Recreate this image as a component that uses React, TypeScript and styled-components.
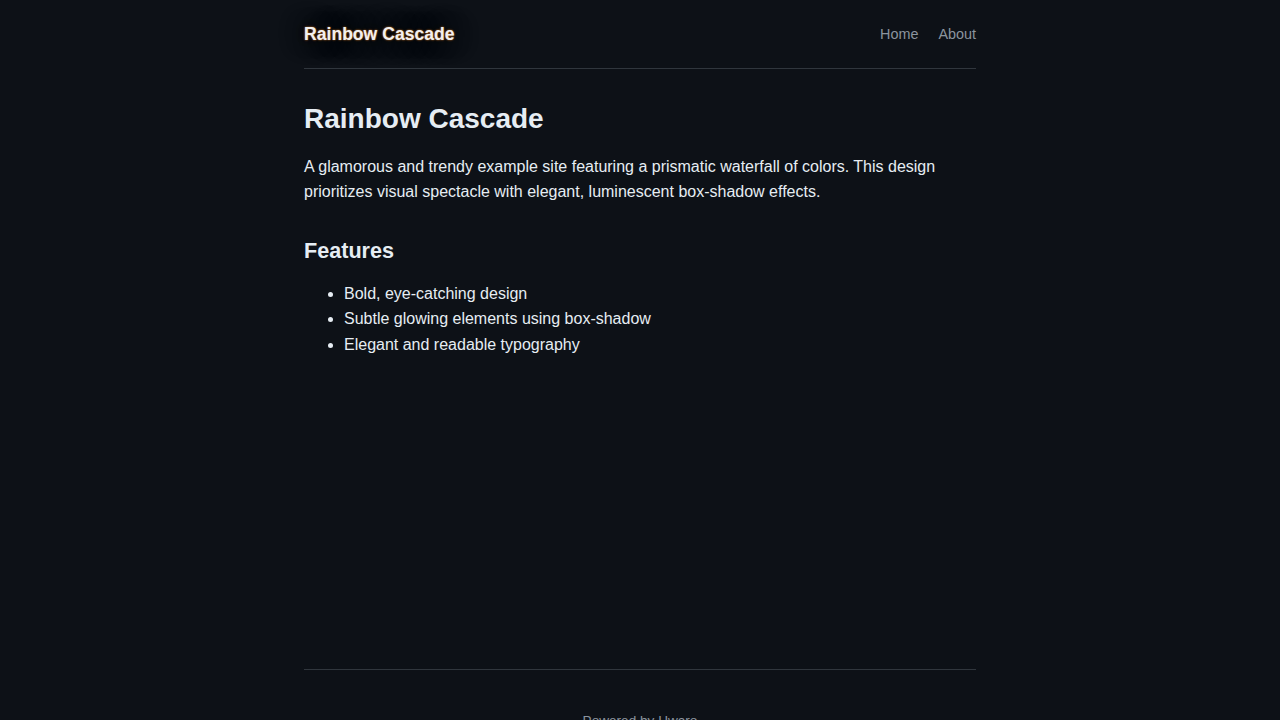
import styled, {createGlobalStyle} from 'styled-components';

const GlobalStyle = createGlobalStyle`
  body {
    margin: 0;
    background-color: #0d1117;
    color: #e6edf3;
    font-family: "Liberation Sans", Arial, sans-serif;
    font-size: 16px;
    line-height: 1.6;
  }
`;

const Page = styled.div`
  max-width: 672px;
  margin: 0 auto;
`;

const Header = styled.header`
  display: flex;
  justify-content: space-between;
  align-items: center;
  height: 68px;
  border-bottom: 1px solid #30363d;
`;

const Logo = styled.a`
  color: #f0f0f0;
  font-size: 17.6px;
  font-weight: bold;
  line-height: 22px;
  text-decoration: none;
  text-shadow:
    0 0 2px rgba(255, 140, 40, 0.9),
    0 0 18px #000008,
    0 0 24px #000008;
`;

const Nav = styled.nav`
  display: flex;
  gap: 20px;
  line-height: 22px;
`;

const NavLink = styled.a`
  color: #8b949e;
  font-size: 14.4px;
  text-decoration: none;
`;

const Main = styled.main`
  box-sizing: border-box;
  min-height: 600px;
  padding-top: 33px;
`;

const Title = styled.h1`
  font-size: 28px;
  line-height: 1.2;
  margin: 0 0 18px;
`;

const Intro = styled.p`
  margin: 0;
`;

const SectionTitle = styled.h2`
  font-size: 21.6px;
  line-height: 1.2;
  margin: 33px 0 17px;
`;

const List = styled.ul`
  margin: 0;
  padding-left: 40px;
`;

const Footer = styled.footer`
  border-top: 1px solid #30363d;
  padding: 40px 0;
  text-align: center;
  color: #8b949e;
  font-size: 13.6px;
`;

const FooterLink = styled.a`
  color: #8b949e;
  text-decoration: none;
`;

export default function App() {
  return (
    <>
      <GlobalStyle />
      <Page>
        <Header>
          <Logo href="#">Rainbow Cascade</Logo>
          <Nav>
            <NavLink href="#">Home</NavLink>
            <NavLink href="#">About</NavLink>
          </Nav>
        </Header>
        <Main>
          <Title>Rainbow Cascade</Title>
          <Intro>
            A glamorous and trendy example site featuring a prismatic waterfall of colors. This
            design prioritizes visual spectacle with elegant, luminescent box-shadow effects.
          </Intro>
          <SectionTitle>Features</SectionTitle>
          <List>
            <li>Bold, eye-catching design</li>
            <li>Subtle glowing elements using box-shadow</li>
            <li>Elegant and readable typography</li>
          </List>
        </Main>
        <Footer>
          Powered by <FooterLink href="#">Hwaro</FooterLink>
        </Footer>
      </Page>
    </>
  );
}
